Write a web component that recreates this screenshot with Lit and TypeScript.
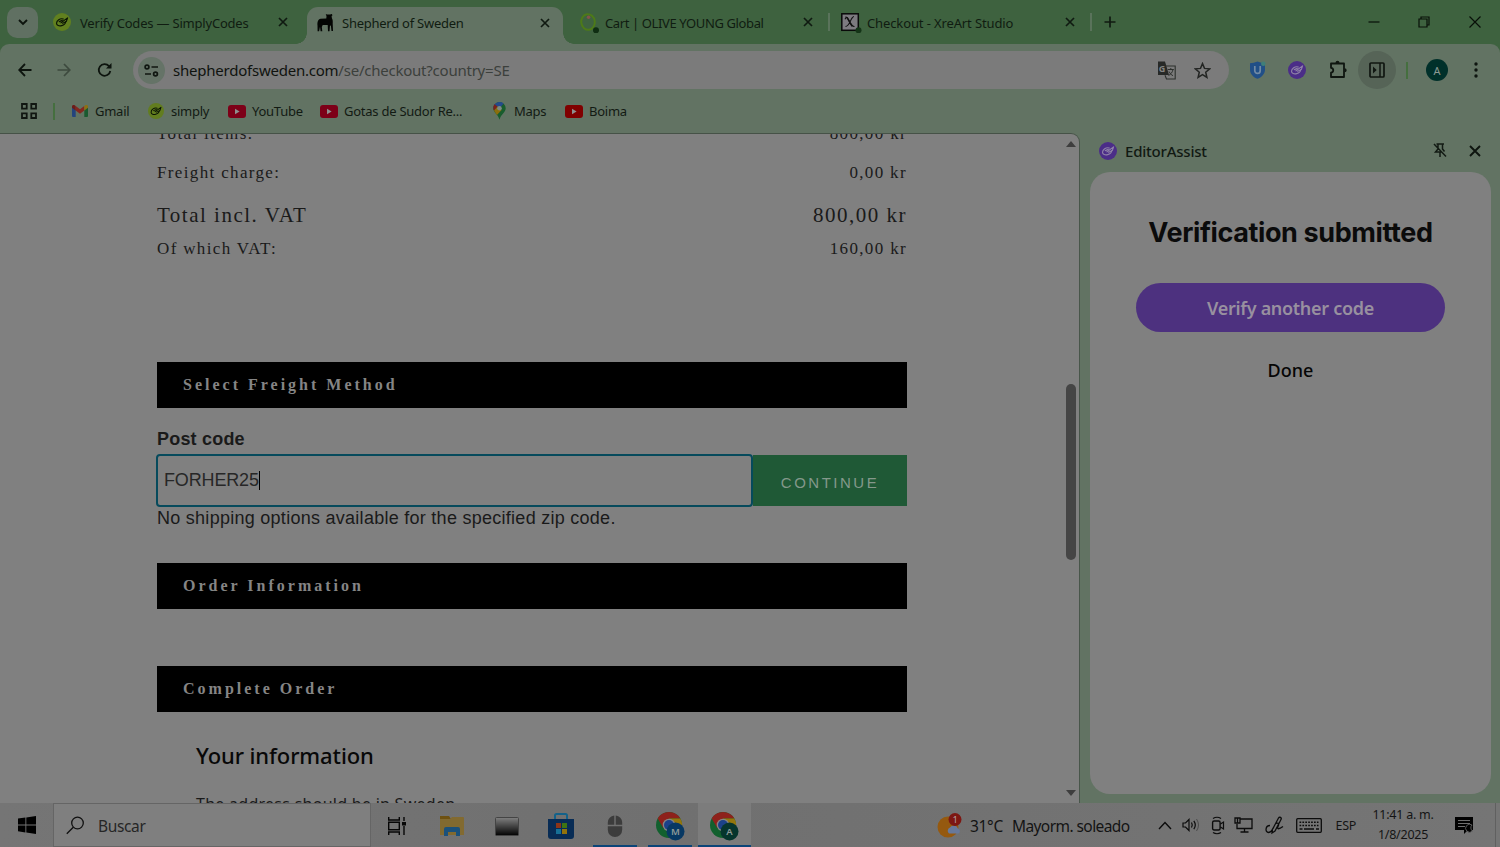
import { LitElement, html, css } from "lit";
import { customElement } from "lit/decorators.js";

const leaf = (bg: string, fg: string, s = 18) => html`<svg class="ic" width=${s} height=${s} viewBox="0 0 18 18"><circle cx="9" cy="9" r="9" fill=${bg}/><g fill="none" stroke=${fg} stroke-width="1.150" stroke-linecap="round" stroke-linejoin="round"><path d="M10.300 6C7 5 3.600 7.300 3.500 10.300c0 2.300 2.800 3 5.200 2.300 2.300-.6 3.800-2 4-3.900"/><path d="M8 9.800l6.600-4.900-1.300 3.700-3.600 1.700"/><path d="M6.300 8.600l3-1.200"/></g></svg>`;
const close = (s = 10, w = 1.7) => html`<svg class="ic" width=${s} height=${s} viewBox="0 0 10 10"><path d="M1 1l8 8M9 1l-8 8" stroke="#101a11" stroke-width=${w} fill="none"/></svg>`;
const youtube = (c: string) => html`<svg class="ic" width="18" height="13" viewBox="0 0 18 13"><rect width="18" height="13" rx="3" fill=${c}/><path d="M7 3.800v5.400l4.600-2.700z" fill="#8f8f8f"/></svg>`;
const chrome = (letter: string, bg: string) => html`<svg class="ic" width="30" height="30" viewBox="0 0 30 30">
  <circle cx="14" cy="14" r="13" fill="#12602e"/>
  <path d="M2.700 7.500A13 13 0 0 1 25.300 7.500H14L8.400 17.200z" fill="#8e211b"/>
  <path d="M25.300 7.500A13 13 0 0 1 14 27l5.600-9.800L14 7.500z" fill="#94760c"/>
  <circle cx="14" cy="14" r="6.300" fill="#858585"/><circle cx="14" cy="14" r="5" fill="#1b4189"/>
  <circle cx="20.500" cy="20.500" r="9" fill=${bg}/>
  <text x="20.500" y="24" text-anchor="middle" font-family="Noto Sans, sans-serif" font-size="9.500" font-weight="600" fill="#8d9a98">${letter}</text></svg>`;
const bookmarks = [
  { name: "Gmail", w: 76, gap: 7, icon: html`<svg class="ic" width="16" height="12" viewBox="0 0 16 12"><path d="M0 1.500V11a1 1 0 0 0 1 1h2.700V5z" fill="#24447d"/><path d="M16 1.500V11a1 1 0 0 1-1 1h-2.700V5z" fill="#1a5a30"/><path d="M3.700 1v4.500L8 8.800l4.300-3.300V1L8 4.300z" fill="#84271f"/><path d="M0 1.500C0 0 1.600-.4 2.600.2l1.100.8v4.500L0 2.700z" fill="#6e1b18"/><path d="M16 1.500C16 0 14.400-.4 13.400.2L12.300 1v4.500L16 2.700z" fill="#8d7012"/></svg>` },
  { name: "simply", w: 80, gap: 7, icon: leaf("#627d1f", "#0a1404", 16) },
  { name: "YouTube", w: 92, gap: 6, icon: youtube("#7d0018") },
  { name: "Gotas de Sudor Re...", w: 173, gap: 6, icon: youtube("#7d0018") },
  { name: "Maps", w: 72, gap: 8, icon: html`<svg class="ic" width="13" height="18" viewBox="0 0 13 18"><path d="M6.500 0A6.300 6.300 0 0 0 .3 6.300c0 4.500 4.700 5.500 6.200 11.500 1.500-6 6.200-7 6.200-11.500A6.300 6.300 0 0 0 6.500 0z" fill="#185d2d"/><path d="M1.700 2.300A6.300 6.300 0 0 1 10.600 1.500L3.300 10.200C1.500 8.500-.8 5.500 1.700 2.300z" fill="#244a8c"/><path d="M1.700 2.300l3 2.500-3.500 4C.2 7-.3 4.500 1.700 2.300z" fill="#7c211b"/><path d="M1.100 8.500l3.700-4.200 3.800 3.800L4 13C3 11.600 1.700 10.200 1.100 8.500z" fill="#8b6e0d"/><circle cx="6.500" cy="6.300" r="2.300" fill="#7d8a83"/></svg>` },
  { name: "Boima", w: 70, gap: 6, icon: youtube("#800000") },
];

@customElement("browser-tabs")
class BrowserTabs extends LitElement {
  static styles = css`
    :host { display: flex; height: 44px; background: #3e623f; font: 13px/18px "Noto Sans", sans-serif; letter-spacing: -0.2px; color: #101c11; align-items: center; }
    .ic { display: block; flex: none; }
    .list { width: 31px; height: 31px; margin-left: 7px; background: #607062; border-radius: 10px; display: grid; place-items: center; flex: none; }
    .tab { display: flex; align-items: center; height: 44px; box-sizing: border-box; white-space: nowrap; flex: none; }
    .tab .name { margin-left: 9px; flex: 1; margin-top: 2px; }
    .t1 { width: 269px; padding-left: 15px; padding-right: 19px; }
    .t2 { width: 256px; padding-left: 10px; padding-right: 13px; background: #627363; height: 37px; margin-top: 7px; border-radius: 11px 11px 0 0; position: relative; padding-bottom: 6px; }
    .t2 .name { margin-left: 7px; margin-top: 1px; letter-spacing: -0.25px; }
    .t2::before, .t2::after { content: ""; position: absolute; bottom: 0; width: 11px; height: 11px; }
    .t2::before { left: -11px; background: radial-gradient(circle at 0 0, transparent 10.5px, #627363 11px); }
    .t2::after { right: -11px; background: radial-gradient(circle at 100% 0, transparent 10.5px, #627363 11px); }
    .t3 { width: 265px; padding-left: 16px; padding-right: 15px; }
    .t4 { width: 262px; padding-left: 13px; padding-right: 15px; }
    .t3 .name, .t4 .name { margin-left: 5px; }
    .t3 .name { letter-spacing: -0.38px; }
    .t4 .name { letter-spacing: -0.12px; }
    .sep { width: 2px; height: 18px; background: #5a735b; flex: none; margin-right: -2px; }
    .plus { margin-left: 14px; }
    .win { display: flex; margin-left: auto; width: 151px; justify-content: space-around; align-items: center; }
  `;
  render() {
    return html`
      <div class="list"><svg width="10" height="7" viewBox="0 0 10 7"><path d="M1 1l4 4 4-4" fill="none" stroke="#0c130d" stroke-width="1.900"/></svg></div>
      <div class="tab t1">${leaf("#61801f", "#0a1404")}<span class="name">Verify Codes — SimplyCodes</span>${close()}</div>
      <div class="tab t2"><svg class="ic" width="18" height="18" viewBox="0 0 18 18"><path d="M8.800 0l1.200.5h3l1.800-.5.700 1.200-.9.700.3 2.300c.8 1.300 1 3 .8 5.300l.3 7.500h-1.500l-.6-5.200-.9-.4-.5 5.900H11l-.3-6.300-5 .1-.9 2 .5 4.200H3.600L3 12.800l-.9 4.500H.6L.5 11.500C.2 8 1 5.300 3.600 4.800l5.700-.2.200-2.300z" fill="#030503"/></svg><span class="name">Shepherd of Sweden</span>${close()}</div>
      <div class="tab t3"><svg class="ic" width="21" height="22" viewBox="0 0 21 22"><ellipse cx="9" cy="11" rx="6.800" ry="7.800" fill="none" stroke="#4d7a18" stroke-width="2" transform="rotate(-8 9 11)"/><circle cx="9.600" cy="6.200" r="1.800" fill="#85524a"/><circle cx="17" cy="19.300" r="3" fill="#0f2d12"/></svg><span class="name">Cart | OLIVE YOUNG Global</span>${close()}</div>
      <i class="sep"></i>
      <div class="tab t4"><svg class="ic" width="21" height="22" viewBox="0 0 21 22"><rect x=".8" y="2.800" width="16.500" height="16.500" fill="#7d7a80" stroke="#090909" stroke-width="1.500"/><path d="M4.500 6c3.500-1 4 10 9 9.500M13 5.500C9.500 6 9 15.500 4.500 15.500M4 8.300l1.300-2.200" stroke="#111" fill="none" stroke-width="1.100"/><path d="M6 6.300l5.200 9" stroke="#111" stroke-width="1.600"/><circle cx="17.500" cy="19.300" r="3" fill="#143417"/></svg><span class="name">Checkout - XreArt Studio</span>${close()}</div>
      <i class="sep"></i>
      <svg class="ic plus" width="12" height="12" viewBox="0 0 12 12"><path d="M6 .5v11M.5 6h11" stroke="#101a11" stroke-width="1.700"/></svg>
      <div class="win">
        <svg class="ic" width="12" height="12" viewBox="0 0 12 12"><path d="M.5 6h11" stroke="#081008" stroke-width="1.200"/></svg>
        <svg class="ic" width="12" height="12" viewBox="0 0 12 12"><path d="M1 3h8v8H1zM3 3V1h8v8H9" fill="none" stroke="#081008" stroke-width="1.200"/></svg>
        <svg class="ic" width="12" height="12" viewBox="0 0 12 12"><path d="M.5.500l11 11M11.500.5l-11 11" stroke="#081008" stroke-width="1.200"/></svg>
      </div>`;
  }
}

@customElement("browser-toolbar")
class BrowserToolbar extends LitElement {
  static styles = css`
    :host { display: block; height: 89px; background: #3e623f; font-family: "Noto Sans", sans-serif; color: #121a13; }
    .wrap { background: #627363; border-radius: 9px 9px 0 0; height: 89px; }
    .ic { display: block; flex: none; }
    .nav { display: flex; align-items: center; height: 52px; }
    .back { margin-left: 18px; } .fwd { margin-left: 25px; } .re { margin-left: 26px; }
    .omni { width: 1096px; height: 38px; margin-left: 20px; border-radius: 19px; background: #7b7b7b; display: flex; align-items: center; box-sizing: border-box; padding: 0 18px 0 5px; }
    .tune { width: 27px; height: 27px; border-radius: 50%; background: #657367; display: grid; place-items: center; }
    .url { margin-left: 8px; font-size: 15px; letter-spacing: -0.23px; line-height: 20px; margin-top: -1px; color: #3c403c; white-space: nowrap; flex: 1; }
    .url b { font-weight: 400; color: #10130f; }
    .star { margin-left: 18px; }
    .ext { display: flex; align-items: center; margin-left: 20px; }
    .leaf { margin-left: 22px; }
    .puzzle { margin-left: 22px; }
    .panel { width: 38px; height: 38px; border-radius: 50%; background: #566457; display: grid; place-items: center; margin-left: 10px; }
    .sep { width: 2px; height: 17px; background: #456f3f; margin-left: 10px; }
    .avatar { width: 22px; height: 22px; border-radius: 50%; background: #00302a; color: #8a9a94; font-size: 11px; display: grid; place-items: center; margin-left: 18px; }
    .dots { margin-left: 26px; }
    .marks { display: flex; align-items: center; height: 30px; font-size: 13px; line-height: 18px; letter-spacing: -0.25px; white-space: nowrap; }
    .apps { margin-left: 21px; }
    .marks .sep { margin-left: 16px; margin-right: 17px; }
    .mark { display: flex; align-items: center; }
    .mark span { margin-top: -1px; }
  `;
  render() {
    return html`<div class="wrap"><div class="nav">
      <svg class="ic back" width="14" height="14" viewBox="0 0 14 14"><path d="M13.500 7H1.500M7 1L1.200 7 7 13" fill="none" stroke="#0d140e" stroke-width="1.800"/></svg>
      <svg class="ic fwd" width="14" height="14" viewBox="0 0 14 14"><path d="M.5 7h12M7 1l5.800 6L7 13" fill="none" stroke="#3d4a3e" stroke-width="1.700"/></svg>
      <svg class="ic re" width="16" height="16" viewBox="0 0 16 16"><path d="M13.300 9A5.800 5.800 0 1 1 12 4.200l1.500 1.500" fill="none" stroke="#0d140e" stroke-width="1.800"/><path d="M14.500 1v5.500H9z" fill="#0d140e"/></svg>
      <div class="omni">
        <div class="tune"><svg width="15" height="13" viewBox="0 0 15 13"><g fill="none" stroke="#101611" stroke-width="1.700"><circle cx="3" cy="3" r="1.900"/><path d="M7.500 3H14M1 10h6"/><circle cx="11.500" cy="10" r="1.900"/></g></svg></div>
        <span class="url"><b>shepherdofsweden.com</b>/se/checkout?country=SE</span>
        <svg class="ic" width="19" height="19" viewBox="0 0 19 19"><path d="M1 .5h7l4 13.500H1z" fill="#272927"/><path d="M8.500 5h9.700v13H9.500L8 14.200" fill="none" stroke="#2d302d" stroke-width="1.100"/><text x="1.800" y="11" font-size="9" font-weight="700" font-family="Noto Sans, sans-serif" fill="#838383">G</text><path d="M10.800 8.500h6M13.800 7v1.500M16 8.500c-.5 3-2.500 5-4.500 6M12 10.500c1 2 2.500 3.500 4 4.200" stroke="#2d302d" fill="none"/></svg>
        <svg class="ic star" width="17" height="17" viewBox="0 0 17 17"><path d="M8.500 1.600l2 4.800 5.200.4-4 3.400 1.200 5.100-4.400-2.700-4.400 2.700 1.200-5.100-4-3.400 5.200-.4z" fill="none" stroke="#232523" stroke-width="1.500"/></svg>
      </div>
      <div class="ext">
        <svg class="ic" width="17" height="18" viewBox="0 0 17 18"><path d="M8.500.5C6 1.500 3.500 2 1 2.200v6.300c0 4.500 3.500 8 7.500 9.200 4-1.200 7.500-4.700 7.500-9.200V2.200C13.500 2 11 1.500 8.500.5z" fill="#214f87"/><path d="M5.800 5v4.700a2.700 2.700 0 0 0 5.400 0V5" fill="none" stroke="#718aa4" stroke-width="1.700"/><circle cx="14.300" cy="2.700" r="2.300" fill="#407f79"/></svg>
        <div class="leaf">${leaf("#4b2d88", "#8f82a7")}</div>
        <svg class="ic puzzle" width="20" height="20" viewBox="0 0 20 20"><path d="M3 3.500h13v13.500H3v-4.300c3-.3 3-4.600 0-4.900z" fill="none" stroke="#0f1610" stroke-width="1.800" stroke-linejoin="round"/><path d="M7.500 3a2 2.200 0 0 1 4 0zM16.500 8.200a2.200 2 0 0 1 0 4z" fill="#0f1610"/></svg>
        <div class="panel"><svg width="16" height="16" viewBox="0 0 16 16"><rect x="1" y="1" width="14" height="14" rx="1" fill="none" stroke="#101611" stroke-width="1.700"/><path d="M11 1v14" stroke="#101611" stroke-width="1.500"/><path d="M4 4.500L7.700 8 4 11.500z" fill="#101611"/></svg></div>
        <i class="sep"></i><div class="avatar">A</div>
        <svg class="ic dots" width="4" height="16" viewBox="0 0 4 16"><g fill="#0e150f"><circle cx="2" cy="2" r="1.700"/><circle cx="2" cy="8" r="1.700"/><circle cx="2" cy="14" r="1.700"/></g></svg>
      </div></div>
      <div class="marks"><svg class="ic apps" width="16" height="16" viewBox="0 0 16 16"><path d="M1 1h4.700v4.700H1zM10.300 1H15v4.700h-4.700zM1 10.300h4.700V15H1zM10.300 10.300H15V15h-4.700z" fill="none" stroke="#101611" stroke-width="1.800"/></svg><i class="sep"></i>
      ${bookmarks.map((b) => html`<div class="mark" style="width:${b.w}px;column-gap:${b.gap}px">${b.icon}<span>${b.name}</span></div>`)}</div></div>`;
  }
}

@customElement("checkout-page")
class CheckoutPage extends LitElement {
  static styles = css`
    :host { display: flex; width: 1080px; height: 670px; background: #808080; overflow: hidden; border-top: 1px solid #465247; border-right: 1px solid #48564a; border-top-right-radius: 9px; box-sizing: border-box; color: #1a1a1a; }
    .body { width: 750px; margin-left: 157px; flex: none; }
    .row { display: flex; justify-content: space-between; font: 17px/20px "Liberation Serif", serif; letter-spacing: 1.35px; height: 20px; }
    .r1 { margin-top: -10px; }
    .r2 { margin-top: 19px; }
    .big { font-size: 21px; line-height: 26px; height: 26px; margin-top: 19px; letter-spacing: 1.5px; }
    .r4 { margin-top: 11px; }
    .bar { background: #000; color: #858585; height: 46px; box-sizing: border-box; padding-left: 26px; font: bold 16px/45px "Liberation Serif", serif; letter-spacing: 3px; }
    .b1 { margin-top: 103px; }
    label { display: block; font: bold 18px/22px "Liberation Sans", sans-serif; margin-top: 20px; letter-spacing: .2px; }
    .form { display: flex; margin: 4px 0 0 -1px; align-items: center; }
    .field { width: 597px; height: 53px; box-sizing: border-box; border: 2px solid #064a5c; border-radius: 4px; padding-left: 6px; font: 18px/49px "Liberation Sans", sans-serif; display: flex; align-items: center; letter-spacing: -0.15px; color: #272727; }
    .caret { width: 1px; height: 19px; background: #000; }
    .go { flex: 1; height: 51px; background: #1f5936; color: #84988b; font: 15px/55px "Liberation Sans", sans-serif; text-align: center; letter-spacing: 2.5px; }
    .note { font: 18px/22px "Liberation Sans", sans-serif; letter-spacing: .27px; }
    .b2 { margin-top: 34px; }
    .b3 { margin-top: 57px; }
    h2 { font: 500 22px/30px "Noto Sans", sans-serif; margin: 28px 0 0 39px; letter-spacing: -0.1px; color: #080808; }
    .addr { font: 16px/22px "Noto Sans", sans-serif; margin: 23px 0 0 39px; white-space: nowrap; letter-spacing: .27px; }
    .scroll { margin-left: auto; width: 17px; display: flex; flex-direction: column; align-items: center; padding: 7px 0 7px; box-sizing: border-box; }
    .thumb { width: 10px; height: 176px; border-radius: 5px; background: #454545; margin-top: 237px; }
    .dn { margin-top: auto; }
  `;
  render() {
    return html`<div class="body">
      <div class="row r1"><span>Total items:</span><span>800,00 kr</span></div>
      <div class="row r2"><span>Freight charge:</span><span>0,00 kr</span></div>
      <div class="row big"><span>Total incl. VAT</span><span>800,00 kr</span></div>
      <div class="row r4"><span>Of which VAT:</span><span>160,00 kr</span></div>
      <div class="bar b1">Select Freight Method</div>
      <label>Post code</label>
      <div class="form"><div class="field">FORHER25<i class="caret"></i></div><div class="go">CONTINUE</div></div>
      <div class="note">No shipping options available for the specified zip code.</div>
      <div class="bar b2">Order Information</div>
      <div class="bar b3">Complete Order</div>
      <h2>Your information</h2>
      <div class="addr">The address should be in Sweden</div>
    </div>
    <div class="scroll">
      <svg width="10" height="6" viewBox="0 0 10 6"><path d="M0 6l5-6 5 6z" fill="#3e3e3e"/></svg>
      <i class="thumb"></i>
      <svg class="dn" width="10" height="6" viewBox="0 0 10 6"><path d="M0 0l5 6 5-6z" fill="#3e3e3e"/></svg>
    </div>`;
  }
}

@customElement("side-panel")
class SidePanel extends LitElement {
  static styles = css`
    :host { display: block; flex: 1; background: #627363; height: 670px; box-sizing: border-box; padding: 0 9px 0 10px; font-family: "Noto Sans", sans-serif; }
    .head { display: flex; align-items: center; height: 39px; padding: 0 10px 4px 9px; box-sizing: border-box; }
    .ic { display: block; flex: none; }
    .head span { font-size: 15px; font-weight: 500; letter-spacing: -0.22px; margin-left: 8px; flex: 1; color: #111912; }
    .head .x { margin-left: 22px; }
    .card { height: 622px; border-radius: 20px; background: #808080; display: flex; flex-direction: column; align-items: center; box-sizing: border-box; padding-top: 41px; }
    h1 { margin: 0; font: 700 27px/40px Inter, sans-serif; letter-spacing: -0.38px; color: #0b0b0b; white-space: nowrap; }
    .btn { width: 309px; height: 49px; border-radius: 25px; background: #4d317f; color: #98909f; margin-top: 30px; font-size: 18px; font-weight: 600; line-height: 50px; text-align: center; letter-spacing: -0.3px; }
    .done { margin-top: 24px; font-size: 18px; font-weight: 500; line-height: 28px; color: #060606; }
  `;
  render() {
    return html`<div class="head">${leaf("#4b2d88", "#8f82a7")}<span>EditorAssist</span>
      <svg class="ic" width="14" height="15" viewBox="0 0 14 15"><path d="M1 1l12 12.500M3.500 1H11M5 1v5L2.500 9H9M9.500 1v5l2 2.500M7 9v5" fill="none" stroke="#131b14" stroke-width="1.500"/></svg>
      <svg class="ic x" width="12" height="12" viewBox="0 0 12 12"><path d="M1 1l10 10M11 1L1 11" stroke="#0e150f" stroke-width="1.900"/></svg></div>
      <div class="card"><h1>Verification submitted</h1><div class="btn">Verify another code</div><div class="done">Done</div></div>`;
  }
}

@customElement("task-bar")
class TaskBar extends LitElement {
  static styles = css`
    :host { display: flex; height: 44px; background: linear-gradient(90deg, #757575, #707070 45%, #757575); font-family: "Noto Sans", sans-serif; color: #141414; align-items: center; white-space: nowrap; }
    .ic { display: block; flex: none; }
    .start { margin-left: 18px; }
    .search { margin-left: 17px; width: 318px; height: 44px; box-sizing: border-box; border: 1px solid #656565; background: #7f7f7f; display: flex; align-items: center; padding: 1px 0 0 12px; gap: 13px; font-size: 15.500px; letter-spacing: -0.35px; color: #262626; flex: none; }
    .app { width: 54.4px; height: 44px; display: grid; place-items: center; flex: none; box-sizing: border-box; padding-top: 2px; }
    .view { width: 54px; padding-right: 2px; }
    .run { background: linear-gradient(#0b4478, #0b4478) center bottom / 44px 2px no-repeat; }
    .cur { background: linear-gradient(#0b4478, #0b4478) center bottom / 53px 2px no-repeat, #7c7c7c; width: 53px; margin-left: 1px; }
    .weather { display: flex; align-items: center; margin-left: 186px; font-size: 15.500px; letter-spacing: -0.3px; padding-top: 1px; }
    .weather span { margin-left: 7px; } .weather span + span { margin-left: 9px; letter-spacing: -0.57px; }
    .tray { display: flex; align-items: center; margin-left: auto; }
    .speaker, .cam, .net { margin-left: 10px; }
    .net { margin-left: 9px; }
    .pen { margin-left: 12px; }
    .kbd { margin-left: 12px; }
    .esp { font-size: 12.500px; letter-spacing: -0.3px; margin-left: 14px; }
    .clock { font-size: 12.500px; line-height: 20px; letter-spacing: -0.25px; text-align: center; margin-left: 16px; width: 62px; }
    .note { margin-left: 20px; margin-right: 21px; }
    .edge { width: 1px; height: 44px; background: #606060; margin-right: 4px; }
  `;
  render() {
    return html`
      <svg class="ic start" width="18" height="18" viewBox="0 0 18 18"><path d="M0 2.600l7.400-1v6.900H0zM8.300 1.500L18 0v8.500H8.300zM0 9.400h7.400v7L0 15.300zM8.300 9.400H18V18l-9.700-1.400z" fill="#000"/></svg>
      <div class="search"><svg class="ic" width="19" height="19" viewBox="0 0 19 19"><circle cx="11.500" cy="7" r="5.800" fill="none" stroke="#111" stroke-width="1.300"/><path d="M7.300 11.200L.8 17.800" stroke="#111" stroke-width="1.300"/></svg>Buscar</div>
      <div class="app view"><svg width="20" height="18" viewBox="0 0 20 18"><path d="M1.700 0v3h10.600V0M1.700 18v-3h10.600v3M1.700 5.300h10.600v7.400H1.700zM17 0v4M17 9v9" fill="none" stroke="#060606" stroke-width="1.400"/><rect x="15" y="5" width="4" height="3.500" fill="#060606"/></svg></div>
      <div class="app"><svg width="24" height="22" viewBox="0 0 24 22"><path d="M0 1h9l2 3H0z" fill="#6e5111"/><path d="M0 4h10l2-2h11a1 1 0 0 1 1 1v17H0z" fill="#826a30"/><path d="M4 21v-7a2 2 0 0 1 2-2h12a2 2 0 0 1 2 2v7h-4v-4H8v4z" fill="#1b517b"/></svg></div>
      <div class="app"><svg width="24" height="19" viewBox="0 0 24 19"><defs><linearGradient id="g" x2="0" y2="1"><stop stop-color="#808080"/><stop offset="1" stop-color="#020202"/></linearGradient></defs><rect x=".5" y=".5" width="23" height="18" rx="1" fill="url(#g)" stroke="#444"/></svg></div>
      <div class="app"><svg width="26" height="27" viewBox="0 0 26 27"><path d="M7 7V2.500a1.500 1.500 0 0 1 1.500-1.500h9A1.500 1.500 0 0 1 19 2.500V7" fill="none" stroke="#14628a" stroke-width="2"/><path d="M0 6h26v17a3 3 0 0 1-3 3H3a3 3 0 0 1-3-3z" fill="#082c55"/><path d="M8 10h5v5H8z" fill="#8b3418"/><path d="M14 10h5v5h-5z" fill="#3e7413"/><path d="M8 16h5v5H8z" fill="#177096"/><path d="M14 16h5v5h-5z" fill="#92730c"/></svg></div>
      <div class="app run"><svg width="16" height="23" viewBox="0 0 16 23"><path d="M7.300.5v9.300H.8V7.500a7 7 0 0 1 6.500-7zM8.700.5v9.300h6.500V7.500a7 7 0 0 0-6.500-7zM.8 11.300h14.400v3.500a7.200 7.200 0 0 1-14.400 0z" fill="#3c3c3c"/></svg></div>
      <div class="app run">${chrome("M", "#073863")}</div>
      <div class="app cur">${chrome("A", "#06352d")}</div>
      <div class="weather"><svg class="ic" width="26" height="26" viewBox="0 0 26 26"><circle cx="11" cy="14" r="10.500" fill="#95590f"/><path d="M12 20.500a3.500 3.500 0 0 1 1-6 4.500 4.500 0 0 1 8 1.200 2.600 2.600 0 0 1 .5 4.800z" fill="#68799a"/><circle cx="18" cy="6.500" r="6.500" fill="#7d1712"/><text x="18" y="10" text-anchor="middle" font-family="Noto Sans, sans-serif" font-size="9.500" fill="#b0a0a0">1</text></svg><span>31°C</span><span>Mayorm. soleado</span></div>
      <div class="tray">
        <svg class="ic" width="14" height="9" viewBox="0 0 14 9"><path d="M1 8l6-6.500L13 8" fill="none" stroke="#0c0c0c" stroke-width="1.400"/></svg>
        <svg class="ic speaker" width="19" height="14" viewBox="0 0 19 14"><path d="M1 5h2.500L7 1.500v11L3.500 9H1z" fill="none" stroke="#0c0c0c" stroke-width="1.200"/><path d="M9.500 4.500q1.500 2.500 0 5M11.800 2.800q3 4.200 0 8.400" fill="none" stroke="#0c0c0c" stroke-width="1.200"/><path d="M14.500 1q4 6 0 12" fill="none" stroke="#4c4c4c"/></svg>
        <svg class="ic cam" width="14" height="19" viewBox="0 0 14 19"><rect x="1.600" y="5" width="7.500" height="9" rx="1.500" fill="none" stroke="#0c0c0c" stroke-width="1.400"/><path d="M9.500 8l3-2v7l-3-2M2 2.500q4-2.500 8 0M2 16.500q4 2.500 8 0" fill="none" stroke="#0c0c0c" stroke-width="1.200"/></svg>
        <svg class="ic net" width="19" height="16" viewBox="0 0 19 16"><path d="M6 2h12v9.500H3V7M10.500 11.500V15M6.500 15h8M1 1h5v5H1zM3.500 1v5" fill="none" stroke="#0c0c0c" stroke-width="1.300"/></svg>
        <svg class="ic pen" width="19" height="19" viewBox="0 0 19 19"><path d="M5 9.500c-5 0-5 7-1.500 7 3 0 4-3 5.500-6L13.500 2c1-1.500 3.500-.5 2.500 1.500L10 15l-3 2 .5-4M10.500 7.500c3-1 4 0 2.500 3s1 3 5 0" fill="none" stroke="#0c0c0c" stroke-width="1.300"/></svg>
        <svg class="ic kbd" width="26" height="15" viewBox="0 0 26 15"><rect x=".7" y=".7" width="24.600" height="13.600" rx="1" fill="none" stroke="#0c0c0c" stroke-width="1.300"/><path d="M3.500 4.200h19M3.500 7.500h19" stroke="#0c0c0c" stroke-width="1.600" stroke-dasharray="1.700 1.200"/><path d="M3.500 11h3M8 11h10M20 11h3" stroke="#0c0c0c" stroke-width="1.400"/></svg>
        <span class="esp">ESP</span>
        <div class="clock">11:41 a. m.<br>1/8/2025</div>
        <svg class="ic note" width="20" height="19" viewBox="0 0 20 19"><path d="M1 1h18v13h-5l-4 4v-4H1z" fill="#020202"/><path d="M4 4.500h12M4 7.500h12M4 10.500h7" stroke="#707070" stroke-width="1.200"/><path d="M18 9a4 4 0 1 0 .5 6 4 4 0 0 1-.5-6z" fill="#020202" stroke="#707070" stroke-width=".8"/></svg>
        <i class="edge"></i>
      </div>`;
  }
}

@customElement("app-root")
class AppRoot extends LitElement {
  static styles = css`
    :host { display: block; width: 1500px; height: 847px; overflow: hidden; background: #627363; }
    .main { display: flex; height: 670px; }
  `;
  render() {
    return html`<browser-tabs></browser-tabs><browser-toolbar></browser-toolbar>
      <div class="main"><checkout-page></checkout-page><side-panel></side-panel></div><task-bar></task-bar>`;
  }
}
